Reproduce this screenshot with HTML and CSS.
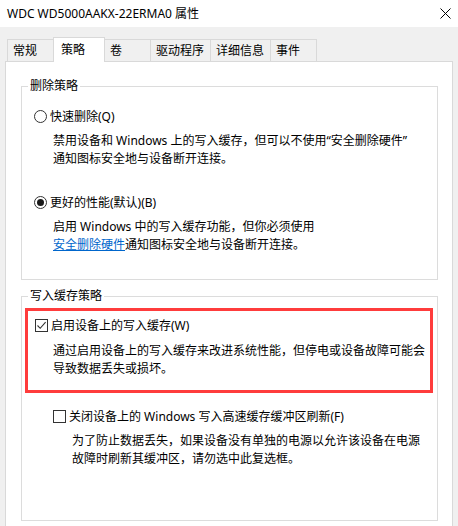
FILE: index.html
```html
<!DOCTYPE html>
<html lang="zh-CN">
<head>
  <meta charset="UTF-8">
  <meta name="viewport" content="width=device-width, initial-scale=1.0">
  <title>WDC WD5000AAKX-22ERMA0 属性</title>
  <link rel="stylesheet" href="styles.css">
</head>
<body>
  <div class="titlebar">
    <span class="title">WDC WD5000AAKX-22ERMA0 属性</span>
    <svg class="close" width="11" height="11" viewBox="0 0 11 11">
      <path d="M0.5 0.5L10.5 10.5M10.5 0.5L0.5 10.5" stroke="#000" stroke-width="1" fill="none"/>
    </svg>
  </div>

  <div class="tabs">
    <div class="tab">常规</div>
    <div class="tab active">策略</div>
    <div class="tab">卷</div>
    <div class="tab">驱动程序</div>
    <div class="tab">详细信息</div>
    <div class="tab">事件</div>
  </div>

  <div class="pane">
    <div class="group">
      <div class="group-label">删除策略</div>
      <div class="option first">
        <span class="radio"></span>
        <span>快速删除(Q)</span>
      </div>
      <p class="desc">禁用设备和 Windows 上的写入缓存，但可以不使用“安全删除硬件”<br>通知图标安全地与设备断开连接。</p>
      <div class="option second">
        <span class="radio checked"></span>
        <span>更好的性能(默认)(B)</span>
      </div>
      <p class="desc">启用 Windows 中的写入缓存功能，但你必须使用<br><a href="#">安全删除硬件</a>通知图标安全地与设备断开连接。</p>
    </div>

    <div class="group cache">
      <div class="group-label">写入缓存策略</div>
      <div class="highlight">
        <div class="option">
          <span class="check">
            <svg width="11" height="11" viewBox="0 0 11 11"><path d="M1.5 5.5L4.2 8.3L9.6 2.2" stroke="#333" stroke-width="1.1" fill="none"/></svg>
          </span>
          <span>启用设备上的写入缓存(W)</span>
        </div>
        <p class="desc">通过启用设备上的写入缓存来改进系统性能，但停电或设备故障可能会<br>导致数据丢失或损坏。</p>
      </div>
      <div class="option sub">
        <span class="check"></span>
        <span>关闭设备上的 Windows 写入高速缓存缓冲区刷新(F)</span>
      </div>
      <p class="desc sub-desc">为了防止数据丢失，如果设备没有单独的电源以允许该设备在电源<br>故障时刷新其缓冲区，请勿选中此复选框。</p>
    </div>
  </div>
</body>
</html>
```

FILE: styles.css
```css
body {
    margin: 0;
    background-color: #f0f0f0;
    color: #000;
    font-family: "Noto Sans", "Noto Sans CJK SC", sans-serif;
    font-size: 12px;
    overflow: hidden;
}
.titlebar {
    height: 27px;
    background: #fff;
    display: flex;
    align-items: center;
    justify-content: space-between;
    padding: 0 7px;
}
.title {
    font-size: 12px;
    line-height: 26px;
}
.close {
    display: block;
    margin-top: 0;
}
.tabs {
    display: flex;
    align-items: flex-end;
    height: 24px;
    margin-top: 10px;
    padding-left: 7px;
}
.tab {
    box-sizing: border-box;
    min-width: 47px;
    height: 22px;
    line-height: 20px;
    padding: 1px 6px 0 5px;
    border: 1px solid #d9d9d9;
    border-bottom: none;
    background: #f0f0f0;
    margin-left: -1px;
}
.tab:first-child {
    margin-left: 0;
}
.tab.active {
    position: relative;
    z-index: 1;
    width: 52px;
    height: 25px;
    margin-bottom: -1px;
    padding: 0 0 0 7px;
    line-height: 23px;
    background: #fff;
}
.pane {
    height: 465px;
    margin: 0 5px;
    border: 1px solid #d9d9d9;
    border-bottom: none;
    background: #fff;
    box-sizing: border-box;
    padding-top: 24px;
}
.group {
    margin: 0 14px 0 15px;
    border: 1px solid #dcdcdc;
    padding-bottom: 25px;
}
.group.cache {
    margin-top: 16px;
    padding-bottom: 52px;
}
.group-label {
    width: fit-content;
    margin: -10px 0 0 6px;
    padding: 0 2px;
    line-height: 18px;
    background: #fff;
}
.option {
    display: flex;
    align-items: center;
    height: 18px;
    padding-left: 12px;
}
.option.first {
    margin-top: 12px;
}
.option.second {
    margin-top: 25px;
}
.radio, .check {
    box-sizing: border-box;
    width: 13px;
    height: 13px;
    margin-right: 3px;
    border: 1px solid #333;
    background: #fff;
    display: flex;
    align-items: center;
    justify-content: center;
}
.radio {
    border-radius: 50%;
}
.radio.checked::after {
    content: "";
    width: 7px;
    height: 7px;
    border-radius: 50%;
    background: #1a1a1a;
}
.check svg {
    display: block;
}
.desc {
    margin: 7px 0 0;
    padding-left: 31px;
    line-height: 18px;
}
.desc a {
    color: #0066cc;
    text-decoration: underline;
}
.highlight {
    margin: 3px 4px 0 3px;
    border: 3px solid #ff3c3c;
    padding: 5px 0 12px;
}
.highlight .option {
    padding-left: 7px;
}
.highlight .desc {
    margin-top: 8px;
    padding-left: 25px;
}
.option.sub {
    margin-top: 14px;
    padding-left: 31px;
}
.desc.sub-desc {
    padding-left: 50px;
}
```
